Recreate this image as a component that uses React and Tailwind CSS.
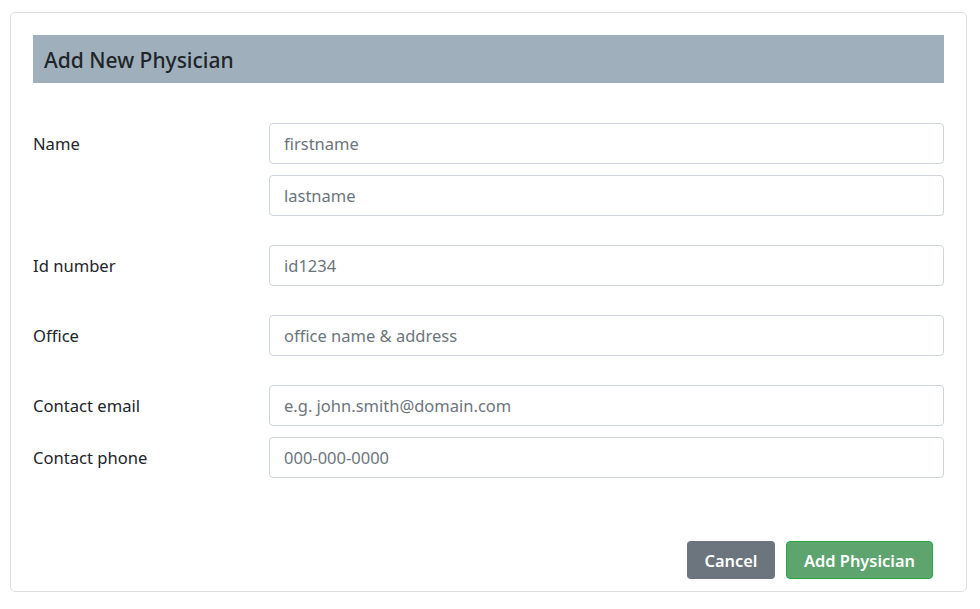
import { useState } from 'react';

const Field = ({ placeholder }) => (
  <input
    placeholder={placeholder}
    className="h-[41px] w-full rounded-[4px] border border-[#ced4da] bg-white px-[14px] text-[16.5px] text-[#495057] placeholder:text-[#6c757d] outline-none"
  />
);

const Row = ({ label, children, className = '' }) => (
  <div className={`flex ${className}`}>
    <label className="w-[236px] shrink-0 pt-[9px] text-[16.6px] text-[#212529]">{label}</label>
    <div className="flex flex-1 flex-col gap-[11px]">{children}</div>
  </div>
);

export default function App() {
  const [saved, setSaved] = useState(false);

  return (
    <div className="min-h-screen bg-white pl-[10px] pr-[13px] pt-[12px] font-['Noto_Sans',sans-serif]">
      <div className="rounded-[5px] border border-[#dfdfdf] px-[22px] pt-[22px] pb-[12px]">
        <div className="flex h-[48px] items-center bg-[#9fb0bc] px-[11px] pt-[3px]">
          <h2 className="text-[21px] font-medium text-[#212529]">Add New Physician</h2>
        </div>

        <form className="mt-[40px]" onSubmit={e => { e.preventDefault(); setSaved(true); }}>
          <Row label="Name">
            <Field placeholder="firstname" />
            <Field placeholder="lastname" />
          </Row>
          <Row label="Id number" className="mt-[29px]">
            <Field placeholder="id1234" />
          </Row>
          <Row label="Office" className="mt-[29px]">
            <Field placeholder="office name & address" />
          </Row>
          <Row label="Contact email" className="mt-[29px]">
            <Field placeholder="e.g. john.smith@domain.com" />
          </Row>
          <Row label="Contact phone" className="mt-[11px]">
            <Field placeholder="000-000-0000" />
          </Row>

          <div className="mt-[63px] flex justify-end gap-[11px] pr-[11px]">
            <button type="button" className="h-[38px] w-[88px] rounded-[4px] bg-[#6c757d] pt-[3px] text-[16.4px] font-semibold text-white">
              Cancel
            </button>
            <button type="submit" className="h-[38px] w-[147px] rounded-[4px] border border-[#28a745] bg-[#5ea46f] pt-[3px] text-[16.4px] font-semibold text-white">
              {saved ? 'Add Physician' : 'Add Physician'}
            </button>
          </div>
        </form>
      </div>
    </div>
  );
}
